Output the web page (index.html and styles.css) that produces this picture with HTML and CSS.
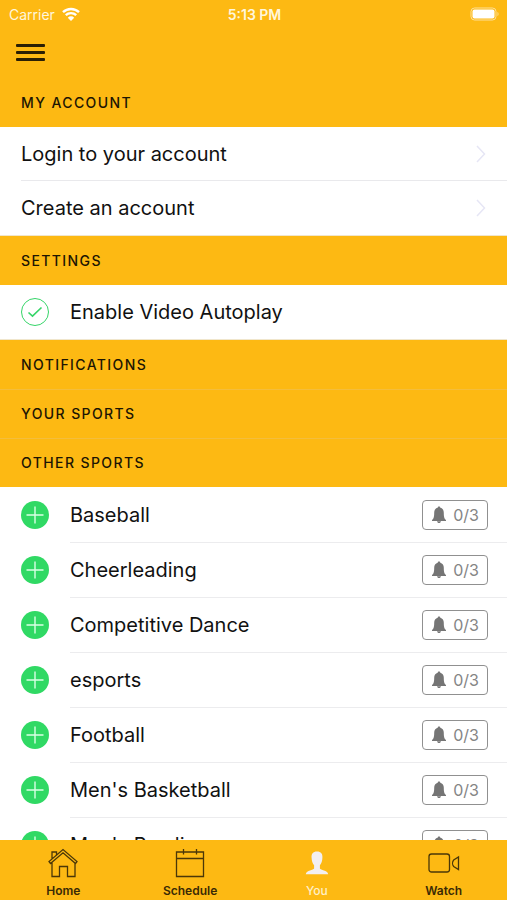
FILE: index.html
```
<!DOCTYPE html>
<html lang="en">
<head>
  <meta charset="UTF-8">
  <meta name="viewport" content="width=device-width, initial-scale=1">
  <title>You</title>
  <link rel="stylesheet" href="styles.css">
</head>
<body>

<!-- Shared icons -->
<svg class="sprite" aria-hidden="true">
  <symbol id="chevron" viewBox="0 0 10 20"><path d="M1 2l7.500 8L1 18"/></symbol>
  <symbol id="plus" viewBox="0 0 28 28"><path d="M14 5.500v17M5.500 14h17"/></symbol>
  <symbol id="bell" viewBox="0 0 16 18">
    <path d="M8 .5c.8 0 1.300.5 1.300 1.200 2.300.6 3.500 2.500 3.500 5 0 4.300.5 5.800 2.200 7.300v.9H1V14c1.700-1.500 2.200-3 2.200-7.300 0-2.500 1.200-4.400 3.500-5C6.700 1 7.200.5 8 .5zM6 15.200h4c-.2 1.100-1 1.800-2 1.800s-1.800-.7-2-1.800z"/>
  </symbol>
</svg>

<header class="top">
  <div class="status-bar">
    <div class="carrier">
      <span>Carrier</span>
      <svg class="wifi" viewBox="0 0 18 14">
        <path d="M1 5.200a11.500 11.500 0 0 1 16 0M3.800 8.200a7.500 7.500 0 0 1 10.400 0"/>
        <path class="wifi-dot" d="M9 14l-3.200-3.300a4.500 4.500 0 0 1 6.400 0z"/>
      </svg>
    </div>
    <div class="time">5:13 PM</div>
    <div class="power">
      <svg class="battery" viewBox="0 0 30 14">
        <rect class="battery-case" x="1" y="1" width="25" height="12" rx="3.500"/>
        <rect class="battery-level" x="2.500" y="2.500" width="22" height="9" rx="2"/>
        <path class="battery-tip" d="M27.500 5c1.300.4 1.300 3.600 0 4z"/>
      </svg>
    </div>
  </div>
  <button class="menu-button" type="button" aria-label="Menu">
    <span></span><span></span><span></span>
  </button>
</header>

<main class="content">
  <h2 class="section-title">MY ACCOUNT</h2>
  <div class="list account">
    <a class="link-row" href="#login"><span class="link-body">Login to your account<svg class="chevron"><use href="#chevron"/></svg></span></a>
    <a class="link-row" href="#create"><span class="link-body">Create an account<svg class="chevron"><use href="#chevron"/></svg></span></a>
  </div>

  <h2 class="section-title">SETTINGS</h2>
  <div class="list">
    <label class="row" for="autoplay">
      <span class="check">
        <input type="checkbox" id="autoplay" checked>
        <svg class="check-mark" viewBox="0 0 28 28"><path d="M7.500 14.500l4 3.700L20.500 9.500"/></svg>
      </span>
      <span class="row-body">Enable Video Autoplay</span>
    </label>
  </div>

  <h2 class="section-title">NOTIFICATIONS</h2>
  <h2 class="section-title">YOUR SPORTS</h2>
  <h2 class="section-title">OTHER SPORTS</h2>
  <div class="sports">
    <div class="row">
      <button class="add" type="button" aria-label="Add Baseball"><svg><use href="#plus"/></svg></button>
      <div class="row-body">Baseball<button class="alerts" type="button"><svg><use href="#bell"/></svg>0/3</button></div>
    </div>
    <div class="row">
      <button class="add" type="button" aria-label="Add Cheerleading"><svg><use href="#plus"/></svg></button>
      <div class="row-body">Cheerleading<button class="alerts" type="button"><svg><use href="#bell"/></svg>0/3</button></div>
    </div>
    <div class="row">
      <button class="add" type="button" aria-label="Add Competitive Dance"><svg><use href="#plus"/></svg></button>
      <div class="row-body">Competitive Dance<button class="alerts" type="button"><svg><use href="#bell"/></svg>0/3</button></div>
    </div>
    <div class="row">
      <button class="add" type="button" aria-label="Add esports"><svg><use href="#plus"/></svg></button>
      <div class="row-body">esports<button class="alerts" type="button"><svg><use href="#bell"/></svg>0/3</button></div>
    </div>
    <div class="row">
      <button class="add" type="button" aria-label="Add Football"><svg><use href="#plus"/></svg></button>
      <div class="row-body">Football<button class="alerts" type="button"><svg><use href="#bell"/></svg>0/3</button></div>
    </div>
    <div class="row">
      <button class="add" type="button" aria-label="Add Men's Basketball"><svg><use href="#plus"/></svg></button>
      <div class="row-body">Men's Basketball<button class="alerts" type="button"><svg><use href="#bell"/></svg>0/3</button></div>
    </div>
    <div class="row">
      <button class="add" type="button" aria-label="Add Men's Bowling"><svg><use href="#plus"/></svg></button>
      <div class="row-body">Men's Bowling<button class="alerts" type="button"><svg><use href="#bell"/></svg>0/3</button></div>
    </div>
  </div>
</main>

<nav class="tabs">
  <a class="tab" href="#home">
    <svg viewBox="0 0 32 32">
      <path d="M3.500 15.500L16 4.800l12.500 10.700 1.500-2L16 1.500l-14 12zM5 11V4h4.500v3.200M5 14.500v14h7.500v-10h8v10H28v-14"/>
    </svg>
    <span>Home</span>
  </a>
  <a class="tab" href="#schedule">
    <svg viewBox="0 0 32 32">
      <path d="M2.500 4h27v24.500h-27zM2.500 10.500h27M9.500 1v5.500M22.500 1v5.500"/>
    </svg>
    <span>Schedule</span>
  </a>
  <a class="tab active" href="#you">
    <svg viewBox="0 0 32 32">
      <path d="M16 3.500c4 0 5.800 2.300 5.400 6.300-.1 3.400-.9 5.700-2.500 7.500v3.200c.5 1.700 7.600 1.500 8.300 5.700H4.800c.7-4.200 7.800-4 8.300-5.700v-3.200c-1.600-1.800-2.400-4.100-2.500-7.500-.4-4 1.400-6.300 5.400-6.300z"/>
    </svg>
    <span>You</span>
  </a>
  <a class="tab" href="#watch">
    <svg viewBox="0 0 32 32">
      <rect x="1" y="6" width="20.500" height="18" rx="2.500"/>
      <path d="M30.500 9v12.500l-4.800-3c-1.500-1.800-1.500-4.700 0-6.500z"/>
    </svg>
    <span>Watch</span>
  </a>
</nav>

</body>
</html>
```
FILE: styles.css
```
* {
  box-sizing: border-box;
}

body {
  margin: 0;
  height: 100vh;
  display: flex;
  flex-direction: column;
  font-family: Inter, "Liberation Sans", sans-serif;
  font-size: 20px;
  color: #111;
  background-color: #fff;
}

button {
  font-family: inherit;
  padding: 0;
  border: 0;
  background: none;
  cursor: pointer;
}

a {
  color: inherit;
  text-decoration: none;
}

svg {
  display: block;
  fill: none;
}

.sprite {
  display: none;
}

/* Status bar and menu */
.top {
  flex: none;
  height: 78px;
  background-color: #fdb913;
}

.status-bar {
  display: flex;
  align-items: center;
  height: 28px;
  padding: 0 7px 0 9px;
  font-size: 14px;
  color: #fff6dc;
}

.carrier,
.power {
  flex: 1;
  display: flex;
  align-items: center;
  gap: 7px;
}

.power {
  justify-content: flex-end;
}

.time {
  font-weight: 600;
}

.wifi {
  width: 18px;
  height: 14px;
  stroke: #fff;
  stroke-width: 2.4;
}

.wifi-dot {
  fill: #fff;
  stroke: none;
}

.battery {
  width: 30px;
  height: 14px;
}

.battery-case {
  stroke: #fee09a;
}

.battery-level {
  fill: #fff;
}

.battery-tip {
  fill: #fee09a;
}

.menu-button {
  display: flex;
  flex-direction: column;
  gap: 4px;
  padding: 16px;
}

.menu-button span {
  width: 29px;
  height: 3px;
  border-radius: 1px;
  background-color: #2a1f04;
}

/* Scrolling content */
.content {
  flex: 1;
  min-height: 0;
  overflow-y: auto;
  scrollbar-width: none;
}

.section-title {
  margin: 0;
  padding: 0 21px;
  font-size: 14px;
  font-weight: 500;
  line-height: 49px;
  letter-spacing: 0.1em;
  color: #1c1503;
  background-color: #fdb913;
}

.section-title + .section-title {
  box-shadow: inset 0 1px #f4bd3c;
}

.list {
  border-bottom: 1px solid #f0e6cc;
}

.link-row {
  display: block;
  padding-left: 21px;
}

.link-body {
  display: flex;
  align-items: center;
  justify-content: space-between;
  height: 54px;
  padding-right: 21px;
}

.link-row + .link-row .link-body {
  box-shadow: 0 -1px #e9e9ec;
}

.chevron {
  width: 10px;
  height: 20px;
  stroke: #e6e6f5;
  stroke-width: 1.5;
}

.row {
  display: flex;
  align-items: center;
  gap: 21px;
  padding-left: 21px;
}

.row-body {
  flex: 1;
  display: flex;
  align-items: center;
  justify-content: space-between;
  height: 54px;
  padding-right: 19px;
}

.sports .row-body {
  height: 55px;
  box-shadow: 0 1px #ececee;
}

.check {
  display: grid;
  width: 28px;
  height: 28px;
}

.check input,
.check-mark {
  grid-area: 1 / 1;
}

.check input {
  appearance: none;
  margin: 0;
  border: 1px solid #35d568;
  border-radius: 50%;
}

.check-mark {
  stroke: #35d568;
  stroke-width: 1.6;
  pointer-events: none;
}

.check input:not(:checked) + .check-mark {
  visibility: hidden;
}

.add {
  width: 28px;
  height: 28px;
  border-radius: 50%;
  background-color: #30d964;
}

.add svg {
  width: 28px;
  height: 28px;
  stroke: #d9ffe4;
  stroke-width: 1.4;
}

.alerts {
  display: flex;
  align-items: center;
  justify-content: center;
  gap: 6px;
  width: 66px;
  height: 30px;
  border: 1px solid #909090;
  border-radius: 4px;
  font-size: 16px;
  color: #858585;
}

.alerts svg {
  width: 16px;
  height: 18px;
  fill: #757575;
}

/* Bottom tabs */
.tabs {
  flex: none;
  display: flex;
  height: 60px;
  background-color: #fdb913;
}

.tab {
  flex: 1;
  display: flex;
  flex-direction: column;
  align-items: center;
  gap: 3px;
  padding-top: 8px;
  font-size: 12px;
  font-weight: 600;
  line-height: 15px;
  color: #3a2a05;
}

.tab svg {
  width: 32px;
  height: 32px;
  stroke: #4a3708;
  stroke-width: 1.3;
}

.tab.active {
  font-weight: 500;
  color: #fff0c8;
}

.tab.active svg {
  fill: #f3eff0;
  stroke: none;
}
```
